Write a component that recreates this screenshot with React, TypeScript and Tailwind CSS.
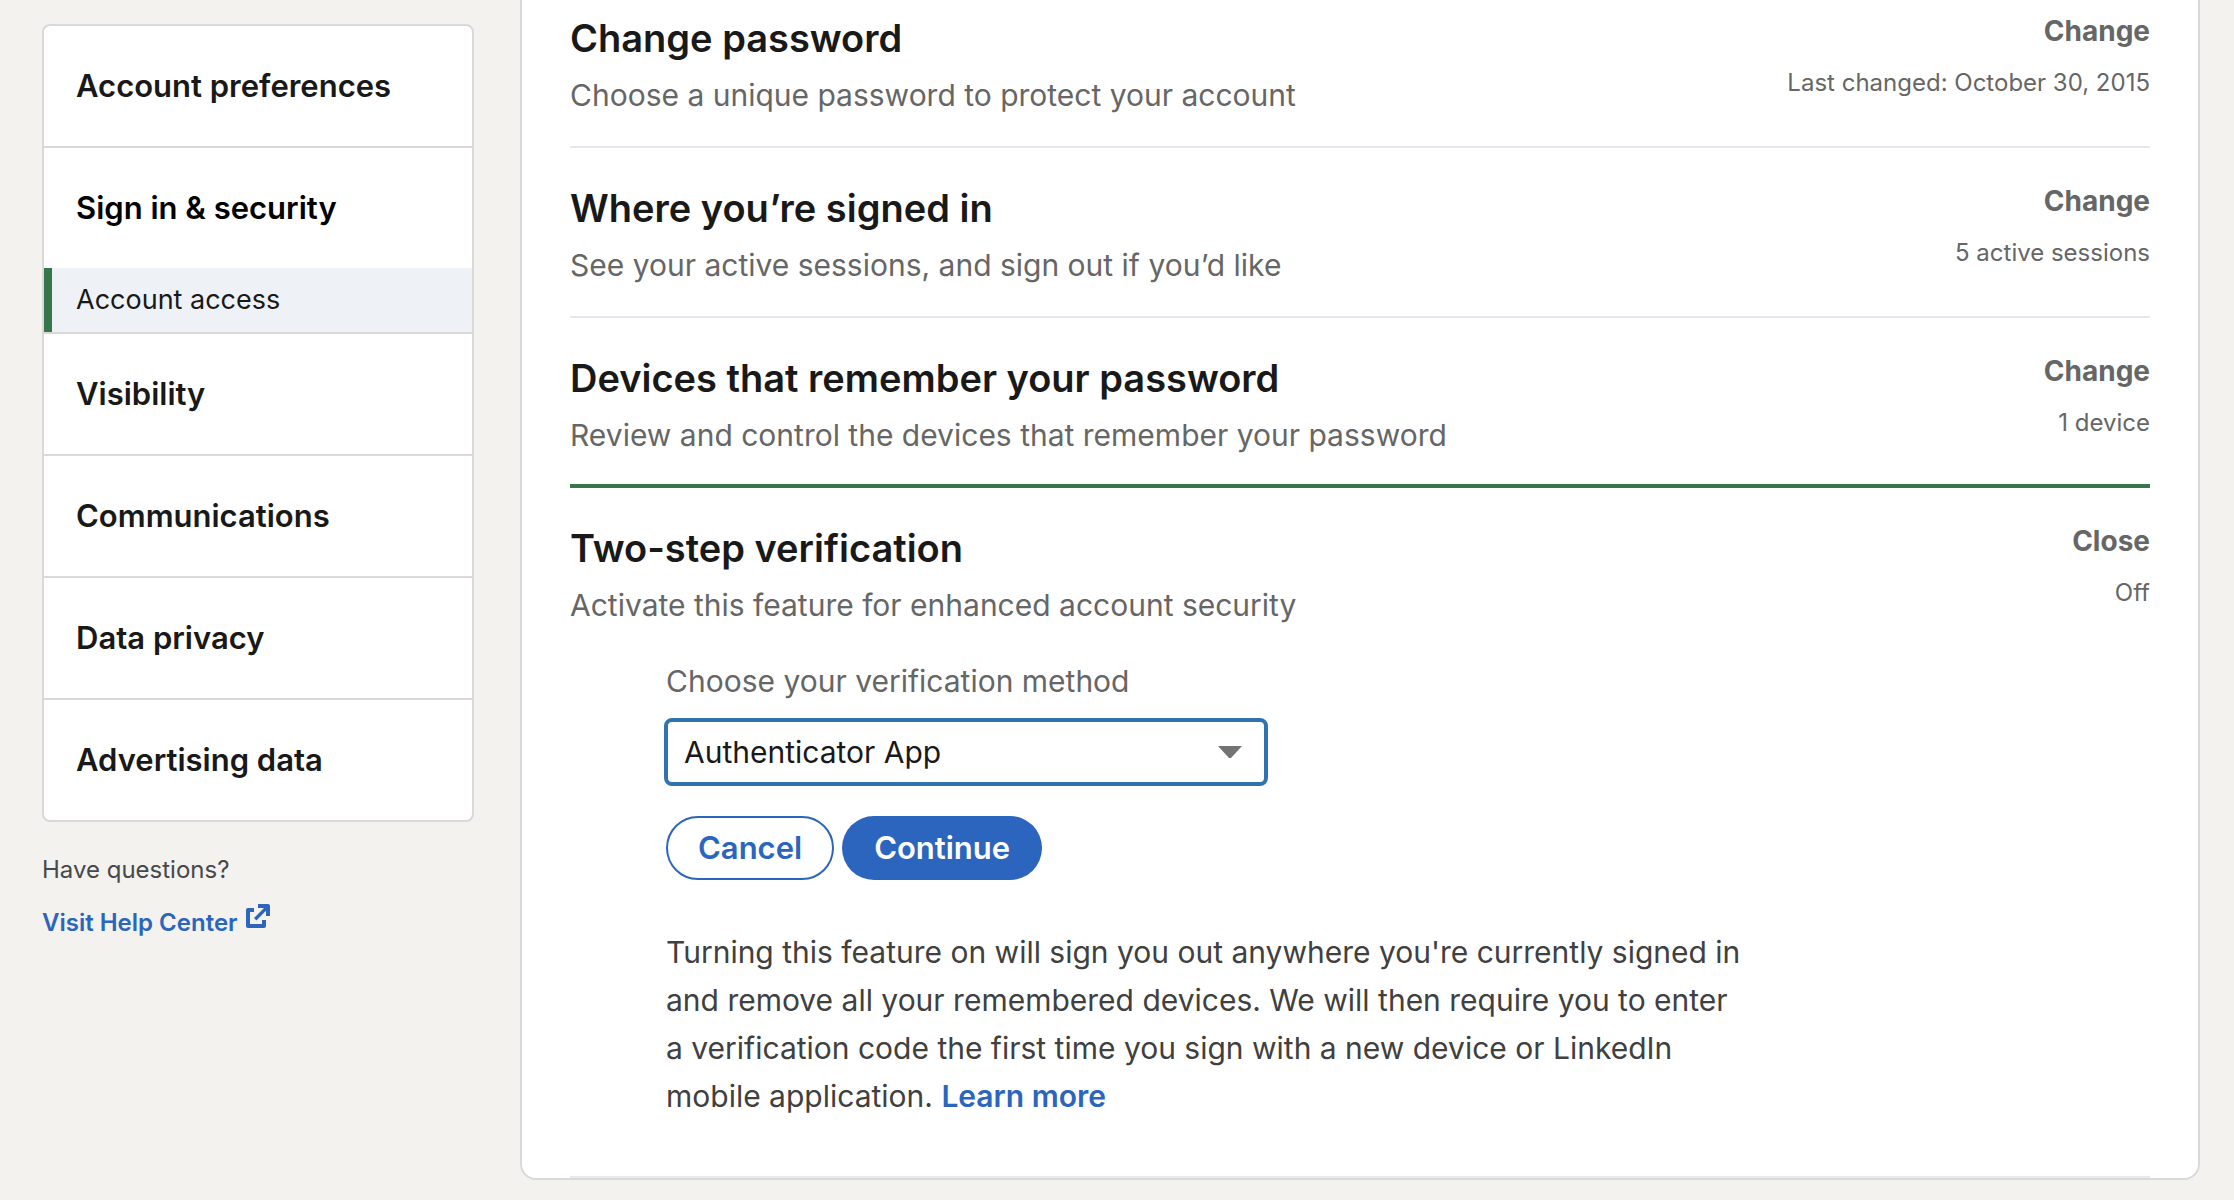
interface SettingRowProps {
  title: string;
  description: string;
  action: string;
  status: string;
}

const settings: SettingRowProps[] = [
  {
    title: "Change password",
    description: "Choose a unique password to protect your account",
    action: "Change",
    status: "Last changed: October 30, 2015",
  },
  {
    title: "Where you’re signed in",
    description: "See your active sessions, and sign out if you’d like",
    action: "Change",
    status: "5 active sessions",
  },
  {
    title: "Devices that remember your password",
    description: "Review and control the devices that remember your password",
    action: "Change",
    status: "1 device",
  },
];

const navItems = [
  { label: "Account preferences" },
  { label: "Sign in & security", child: "Account access" },
  { label: "Visibility" },
  { label: "Communications" },
  { label: "Data privacy" },
  { label: "Advertising data" },
];

function ExternalLinkIcon() {
  return (
    <svg className="w-6 h-6 mb-3.5" viewBox="0 0 24 24" fill="currentColor" aria-hidden="true">
      <path d="M8 4v4H4v12h12v-4h4v6a2 2 0 0 1-2 2H2a2 2 0 0 1-2-2V6a2 2 0 0 1 2-2z" />
      <path d="M12 0h10a2 2 0 0 1 2 2v10h-4V6.800L10.400 16.400 8 14 18 4H12z" />
    </svg>
  );
}

function Sidebar() {
  return (
    <aside className="w-[432px] shrink-0 pt-6">
      <nav className="bg-white border-2 border-[#d9d9d9] rounded-lg overflow-hidden">
        <ul className="divide-y-2 divide-[#d9d9d9]">
          {navItems.map((item) => (
            <li key={item.label}>
              <a
                href="#"
                className={`flex items-center h-[120px] px-8 text-[31px] font-semibold ${
                  item.child ? "text-black" : "text-[#191919]"
                }`}
              >
                {item.label}
              </a>
              {item.child && (
                <a
                  href="#"
                  className="flex items-center h-16 pl-6 border-l-8 border-[#37754a] bg-[#eef2f7] text-[27px] text-[#191919]"
                >
                  {item.child}
                </a>
              )}
            </li>
          ))}
        </ul>
      </nav>

      <p className="mt-8 text-2xl leading-8 text-[#46484b]">Have questions?</p>
      <a
        href="#"
        className="mt-[18px] flex items-center gap-2 text-2xl leading-9 font-semibold text-[#2b65bd]"
      >
        Visit Help Center
        <ExternalLinkIcon />
      </a>
    </aside>
  );
}

function SettingRow({ title, description, action, status }: SettingRowProps) {
  return (
    <div className="flex justify-between pt-9">
      <div>
        <h2 className="text-[38px] leading-[48px] font-semibold text-[#191919]">{title}</h2>
        <p className="mt-3 text-[30px] leading-[42px] text-[#666666]">{description}</p>
      </div>
      <div className="flex flex-col items-end text-[#666666]">
        <button className="text-[28px] leading-[34px] font-bold">{action}</button>
        <p className="mt-5 text-2xl leading-[30px]">{status}</p>
      </div>
    </div>
  );
}

function VerificationForm() {
  return (
    <form className="pl-24 pt-[34px] pb-14" onSubmit={(e) => e.preventDefault()}>
      <label htmlFor="method" className="block text-[30px] leading-[42px] text-[#666666]">
        Choose your verification method
      </label>
      <div className="relative mt-4 -ml-0.5 w-[604px]">
        <select
          id="method"
          className="block w-full h-[68px] pl-4 pr-16 appearance-none bg-white border-4 border-[#3073b0] rounded-lg text-[30px] text-[#191919] outline-none"
        >
          <option>Authenticator App</option>
          <option>Phone Number (SMS)</option>
        </select>
        <svg
          className="absolute right-[26px] top-7 w-6 h-3 pointer-events-none"
          viewBox="0 0 24 12"
          fill="#737373"
          aria-hidden="true"
        >
          <path d="M0 0h24L13 12h-2z" />
        </svg>
      </div>

      <div className="flex gap-2 mt-[30px] text-[31px] font-semibold">
        <button
          type="button"
          className="h-16 px-[30px] rounded-full border-2 border-[#2b65bd] bg-white text-[#2b65bd]"
        >
          Cancel
        </button>
        <button type="submit" className="h-16 px-8 rounded-full bg-[#2b65bd] text-white">
          Continue
        </button>
      </div>

      <p className="mt-12 max-w-[1080px] text-[30px] leading-[48px] text-[#404040]">
        Turning this feature on will sign you out anywhere you're currently signed in and remove
        all your remembered devices. We will then require you to enter a verification code the
        first time you sign with a new device or LinkedIn mobile application.{" "}
        <a href="#" className="font-semibold text-[#2b65bd]">
          Learn more
        </a>
      </p>
    </form>
  );
}

export default function App() {
  return (
    <div className="min-h-screen flow-root bg-[#f3f2ee] font-['Inter','Liberation_Sans',sans-serif]">
      <div className="flex items-start gap-[46px] pl-[42px] pr-[34px]">
        <Sidebar />
        <main className="flex-1 min-w-0 -mt-6 px-12 bg-white border-2 border-[#d9d9d9] rounded-2xl">
          {settings.map((setting, i) => (
            <section
              key={setting.title}
              className={
                i === settings.length - 1
                  ? "pb-7 border-b-4 border-[#37754a]"
                  : "pb-[30px] border-b-2 border-[#e8e8ee]"
              }
            >
              <SettingRow {...setting} />
            </section>
          ))}
          <section className="border-b-2 border-[#e8e8ee]">
            <SettingRow
              title="Two-step verification"
              description="Activate this feature for enhanced account security"
              action="Close"
              status="Off"
            />
            <VerificationForm />
          </section>
        </main>
      </div>
    </div>
  );
}
